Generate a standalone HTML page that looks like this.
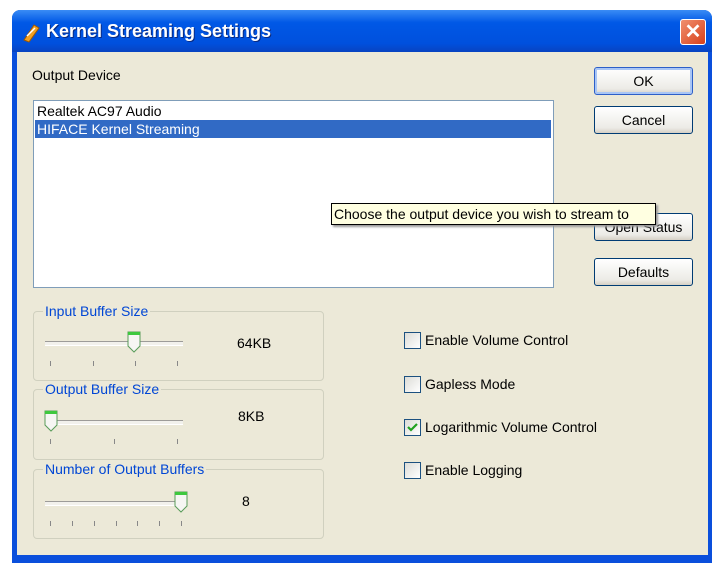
<!DOCTYPE html><html><head><style>
body{margin:0;width:727px;height:581px;background:#fff;position:relative;overflow:hidden;font-family:"Liberation Sans",sans-serif;font-size:14px;color:#000}
.a{position:absolute}
.btn{position:absolute;width:97px;height:26px;border:1px solid #003c74;border-radius:3px;background:linear-gradient(#fff,#ecebe6 80%,#d6d0c5);text-align:center;line-height:26px;font-size:14px}
.gb{position:absolute;left:33px;width:289px;border:1px solid #d0d0bf;border-radius:4px}
.gl{position:absolute;left:9px;top:-9px;background:#ece9d8;color:#0046d5;padding:0 2px;font-size:14px}
.cb{position:absolute;left:404px;width:15px;height:15px;border:1px solid #1c5180;background:linear-gradient(135deg,#dcdcd7,#fff)}
.ct{position:absolute;left:425px;font-size:14px}
.track{position:absolute;height:3px;border-top:1px solid #9d9c99;border-bottom:1px solid #fff;background:#f2f1ec}
.th{position:absolute;width:14px;height:22px}
.tk{position:absolute;width:1px;height:5px;background:#888}
</style></head><body>
<div class="a" style="left:12px;top:10px;width:700px;height:553px;background:#0a4fdc;border-radius:8px 8px 0 0"></div>
<div class="a" style="left:12px;top:10px;width:700px;height:42px;background:linear-gradient(#3a8cf5,#0058e6 30%,#0050dd 80%,#0843c0);border-radius:8px 8px 0 0"></div>
<div class="a" style="left:17px;top:52px;width:691px;height:503px;background:#ece9d8"></div>
<svg class="a" style="left:20px;top:22px" width="22" height="22" viewBox="0 0 22 22"><path d="M4 18 L14 3 L19 6 L9 20 Z" fill="#f4a020" stroke="#a05800"/><path d="M7 14 L15 6" stroke="#fff" stroke-width="1.5"/></svg>
<div class="a" style="left:46px;top:21px;color:#fff;font-weight:bold;font-size:18px;text-shadow:1px 1px #0a2a80">Kernel Streaming Settings</div>
<div class="a" style="left:680px;top:19px;width:24px;height:24px;border:1px solid #fff;border-radius:3px;background:linear-gradient(135deg,#f09070,#d8401a);color:#fff;font-weight:bold;font-size:20px;text-align:center;line-height:24px">✕</div>
<div class="a" style="left:32px;top:67px">Output Device</div>
<div class="a" style="left:33px;top:100px;width:519px;height:186px;border:1px solid #7f9db9;background:#fff"></div>
<div class="a" style="left:37px;top:103px">Realtek AC97 Audio</div>
<div class="a" style="left:35px;top:120px;width:516px;height:18px;background:#316ac5"></div>
<div class="a" style="left:37px;top:121px;color:#fff">HIFACE Kernel Streaming</div>
<div class="btn" style="left:594px;top:67px;border-color:#2d5fc8;box-shadow:inset 0 0 0 2px #a9c6f5">OK</div>
<div class="btn" style="left:594px;top:106px">Cancel</div>
<div class="btn" style="left:594px;top:213px">Open Status</div>
<div class="btn" style="left:594px;top:258px">Defaults</div>
<div class="a" style="left:331px;top:203px;width:321px;height:20px;border:1px solid #000;background:#ffffe1;line-height:20px;padding-left:2px;box-shadow:2px 2px 2px #999">Choose the output device you wish to stream to</div>

<div class="gb" style="top:311px;height:68px"><span class="gl">Input Buffer Size</span></div>
<div class="track" style="left:45px;top:341px;width:138px"></div>
<svg class="th" style="left:127px;top:331px" viewBox="0 0 14 22"><path d="M1 1H13V15L7 21L1 15Z" fill="#f6f6f3" stroke="#5a9c5a"/><rect x="1" y="1" width="12" height="3" fill="#3ec83e"/></svg>
<div class="tk" style="left:50px;top:361px"></div><div class="tk" style="left:93px;top:361px"></div><div class="tk" style="left:135px;top:361px"></div><div class="tk" style="left:177px;top:361px"></div>
<div class="a" style="left:237px;top:335px">64KB</div>

<div class="gb" style="top:389px;height:69px"><span class="gl">Output Buffer Size</span></div>
<div class="track" style="left:45px;top:420px;width:138px"></div>
<svg class="th" style="left:44px;top:410px" viewBox="0 0 14 22"><path d="M1 1H13V15L7 21L1 15Z" fill="#f6f6f3" stroke="#5a9c5a"/><rect x="1" y="1" width="12" height="3" fill="#3ec83e"/></svg>
<div class="tk" style="left:50px;top:439px"></div><div class="tk" style="left:114px;top:439px"></div><div class="tk" style="left:177px;top:439px"></div>
<div class="a" style="left:238px;top:408px">8KB</div>

<div class="gb" style="top:469px;height:68px"><span class="gl">Number of Output Buffers</span></div>
<div class="track" style="left:45px;top:501px;width:138px"></div>
<svg class="th" style="left:174px;top:491px" viewBox="0 0 14 22"><path d="M1 1H13V15L7 21L1 15Z" fill="#f6f6f3" stroke="#5a9c5a"/><rect x="1" y="1" width="12" height="3" fill="#3ec83e"/></svg>
<div class="tk" style="left:50px;top:521px"></div><div class="tk" style="left:72px;top:521px"></div><div class="tk" style="left:94px;top:521px"></div><div class="tk" style="left:116px;top:521px"></div><div class="tk" style="left:137px;top:521px"></div><div class="tk" style="left:159px;top:521px"></div><div class="tk" style="left:181px;top:521px"></div>
<div class="a" style="left:242px;top:493px">8</div>

<div class="cb" style="top:332px"></div><div class="ct" style="top:332px">Enable Volume Control</div>
<div class="cb" style="top:376px"></div><div class="ct" style="top:376px">Gapless Mode</div>
<div class="cb" style="top:419px"><svg width="15" height="15" viewBox="0 0 15 15"><path d="M3 7L6 10L12 4" stroke="#21a121" stroke-width="2.2" fill="none"/></svg></div><div class="ct" style="top:419px">Logarithmic Volume Control</div>
<div class="cb" style="top:462px"></div><div class="ct" style="top:462px">Enable Logging</div>
</body></html>
